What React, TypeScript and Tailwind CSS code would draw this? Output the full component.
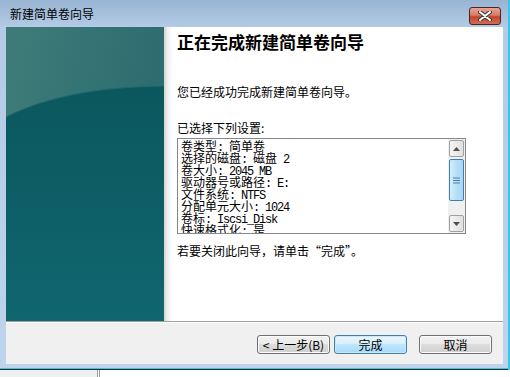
import React from "react";

const settings = [
  "卷类型: 简单卷",
  "选择的磁盘: 磁盘 2",
  "卷大小: 2045 MB",
  "驱动器号或路径: E:",
  "文件系统: NTFS",
  "分配单元大小: 1024",
  "卷标: Iscsi_Disk",
  "快速格式化: 是",
];

// ascii runs get squeezed so they sit at half the width of a CJK glyph, like SimSun
const renderLine = (line: string) => {
  const parts = line.match(/[\x20-\x7e]+|[^\x20-\x7e]+/g) || [];
  return parts.map((p, i) =>
    /^[\x20-\x7e]+$/.test(p) ? (
      <span key={i} className="tracking-[-1.2px]">
        {p}
      </span>
    ) : (
      <span key={i}>{p}</span>
    )
  );
};

const Art = () => (
  <svg width="158" height="294" viewBox="0 0 158 294" className="block">
    <defs>
      <linearGradient id="top" x1="0" y1="0" x2="1" y2="0.4">
        <stop offset="0" stopColor="#3f7c79" />
        <stop offset="1" stopColor="#2a6b6f" />
      </linearGradient>
      <linearGradient id="low" x1="0" y1="0" x2="0" y2="1">
        <stop offset="0" stopColor="#0b575e" />
        <stop offset="1" stopColor="#10666f" />
      </linearGradient>
    </defs>
    <rect width="158" height="294" fill="url(#top)" />
    <path d="M0 90 C 40 70, 90 60, 158 59 L158 294 L0 294 Z" fill="url(#low)" />
    <path d="M0 90 C 40 70, 90 60, 158 59" stroke="#1f6a6c" strokeWidth="1" fill="none" />
  </svg>
);

const Btn = ({ label, primary }: { label: string; primary?: boolean }) => (
  <button
    className={`block h-[19px] w-[73px] rounded-[3px] border text-[12px] leading-[17px] text-black ${
      primary
        ? "border-[#3c7fb1] bg-[linear-gradient(#eaf6fd_0%,#d9f0fc_45%,#bee6fd_50%,#a7d9f5_100%)] shadow-[inset_0_0_0_1px_#cde9f9]"
        : "border-[#707070] bg-[linear-gradient(#f2f2f2_0%,#ebebeb_45%,#dddddd_50%,#cfcfcf_100%)] shadow-[inset_0_0_0_1px_#fcfcfc]"
    }`}
  >
    {label}
  </button>
);

export default function App() {
  return (
    <div className="relative h-[377px] w-[510px] overflow-hidden bg-white font-['Noto_Sans_CJK_SC',sans-serif]">
      <div className="flex h-[368px] w-[508px] flex-col bg-[linear-gradient(#98b4d3_0px,#b3cbe5_27px,#bdd4ec_100%)] px-[6px]">
        {/* title bar */}
        <div className="relative flex h-[27px] items-center pl-[4px]">
          <span className="text-[12px] leading-[14px] text-black">新建简单卷向导</span>
          <div className="absolute right-[1px] top-[7px] flex h-[18px] w-[32px] items-center justify-center rounded-[3px] border border-[#4b2620] bg-[linear-gradient(#e8a493_0%,#d77b66_45%,#c2452c_55%,#cf6d55_100%)]">
            <svg width="14" height="10" viewBox="0 0 14 10">
              <path d="M2 1 L12 9 M12 1 L2 9" stroke="#3a3a3a" strokeWidth="4" strokeLinecap="round" />
              <path d="M2 1 L12 9 M12 1 L2 9" stroke="#ffffff" strokeWidth="2" strokeLinecap="round" />
            </svg>
          </div>
        </div>

        {/* client */}
        <div className="flex h-[337px] w-[497px] flex-col bg-[#f0f0f0]">
          <div className="flex h-[294px]">
            <Art />
            <div className="flex-1 bg-[linear-gradient(90deg,#d2d2d2_0px,#ececec_3px,#ffffff_8px)] pl-[13px]">
              <div className="mt-[4px] text-[17px] font-bold leading-[22px] text-black">正在完成新建简单卷向导</div>
              <div className="mt-[32px] text-[12px] leading-[14px] text-black">您已经成功完成新建简单卷向导。</div>
              <div className="mt-[22px] text-[12px] leading-[14px] text-black">已选择下列设置:</div>
              <div className="mt-[3px] flex h-[96px] w-[289px] border border-[#828790] bg-white">
                <div className="flex-1 overflow-hidden pl-[3px] pt-[3px] font-['Liberation_Mono','Noto_Sans_CJK_SC',monospace] text-[12px] leading-[12px] text-black">
                  {settings.map((s) => (
                    <div key={s} className="whitespace-pre">
                      {renderLine(s)}
                    </div>
                  ))}
                </div>
                <div className="flex w-[17px] flex-col bg-[#f0f0f0] p-[1px]">
                  <div className="flex h-[17px] items-center justify-center rounded-[2px] border border-[#a0a0a0] bg-[linear-gradient(90deg,#f4f4f4,#e0e0e0)]">
                    <svg width="7" height="4" viewBox="0 0 7 4">
                      <path d="M3.5 0 L7 4 L0 4 Z" fill="#505050" />
                    </svg>
                  </div>
                  <div className="mt-[2px] flex h-[42px] items-center justify-center rounded-[2px] border border-[#3c7fb1] bg-[linear-gradient(90deg,#d5eefb,#b6dff7_50%,#a9d8f4)]">
                    <svg width="7" height="7" viewBox="0 0 7 7">
                      <path d="M0 1 H7 M0 3.5 H7 M0 6 H7" stroke="#4d7ea8" strokeWidth="1" />
                    </svg>
                  </div>
                  <div className="flex-1" />
                  <div className="flex h-[17px] items-center justify-center rounded-[2px] border border-[#a0a0a0] bg-[linear-gradient(90deg,#f4f4f4,#e0e0e0)]">
                    <svg width="7" height="4" viewBox="0 0 7 4">
                      <path d="M0 0 L7 0 L3.5 4 Z" fill="#505050" />
                    </svg>
                  </div>
                </div>
              </div>
              <div className="mt-[10px] text-[12px] leading-[14px] text-black">若要关闭此向导，请单击“完成”。</div>
            </div>
          </div>
          <div className="h-[1px] bg-[#a0a0a0]" />
          <div className="h-[1px] bg-white" />
          <div className="flex items-start justify-end pr-[11px] pt-[12px]">
            <div className="flex gap-[4px]">
              <Btn label="< 上一步(B)" />
              <Btn label="完成" primary />
            </div>
            <div className="ml-[12px] flex">
              <Btn label="取消" />
            </div>
          </div>
        </div>
      </div>
      <div className="absolute right-0 top-0 h-[370px] w-[2px] bg-[#3fc3e8]" />
      <div className="h-[1px] w-[508px] bg-[#3fc3e8]" />
      <div className="h-[1px] w-[510px] bg-[#2a2a2a]" />
      <div className="flex h-[7px]">
        <div className="w-[97px] bg-[#f0f0f0]" />
        <div className="w-[3px] border-x border-[#9a9a9a]" />
      </div>
    </div>
  );
}
